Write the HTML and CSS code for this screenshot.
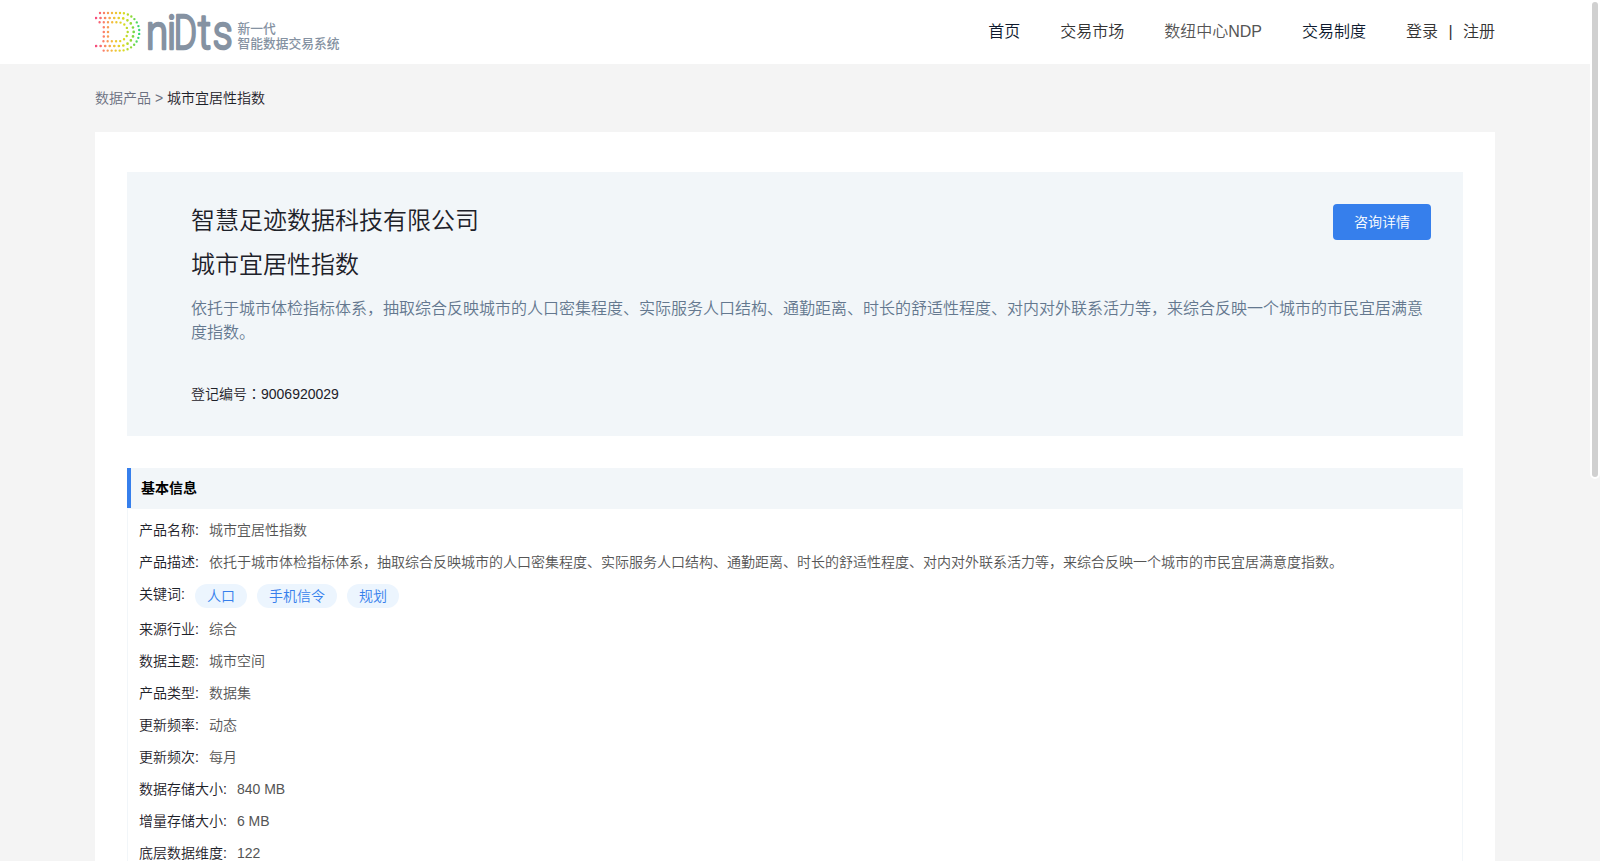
FILE: index.html
```html
<!DOCTYPE html>
<html lang="zh-CN">
<head>
    <meta charset="UTF-8">
    <meta name="viewport" content="width=device-width, initial-scale=1.0">
    <title>城市宜居性指数</title>
    <link rel="stylesheet" href="styles.css">
</head>
<body>
    <header class="header">
        <div class="container header-inner">
            <svg class="logo" width="250" height="64" viewBox="5 -8 250 64">
                <defs>
                    <linearGradient id="dots" gradientUnits="userSpaceOnUse" x1="5" y1="0" x2="50" y2="0">
                        <stop offset="0" stop-color="#f5487f"/>
                        <stop offset="0.2" stop-color="#fb8068"/>
                        <stop offset="0.4" stop-color="#f3c13c"/>
                        <stop offset="0.65" stop-color="#d9dc20"/>
                        <stop offset="0.83" stop-color="#86d83c"/>
                        <stop offset="1" stop-color="#2bd87c"/>
                    </linearGradient>
                </defs>
                <g fill="none" stroke="url(#dots)" stroke-linecap="round">
                    <path stroke-width="2.4" stroke-dasharray="0 4" d="M10 5H30.5A18.8 18.8 0 0 1 30.5 42.6H10"/>
                    <path stroke-width="2.7" stroke-dasharray="0 4.55" d="M6 10H29.7A14 14 0 0 1 29.7 38H6"/>
                    <path stroke-width="2.4" stroke-dasharray="0 4.2" d="M9.6 14.3H28.2A9.5 9.5 0 0 1 28.2 33.3H9.6"/>
                    <path stroke-width="2.5" stroke-dasharray="0 4.6" d="M13.8 19.3V29M18 19.3V29"/>
                </g>
                <g class="logo-name">
                    <text transform="translate(56 40.5) scale(0.84 1)">n</text>
                    <text transform="translate(76.9 40.5) scale(0.84 1)">i</text>
                    <text transform="translate(83.7 40.5) scale(0.74 1)">D</text>
                    <text transform="translate(108 40.5) scale(0.84 1)">t</text>
                    <text transform="translate(122.8 40.5) scale(0.82 1)">s</text>
                </g>
                <text class="logo-text" x="147.5" y="25">新一代</text>
                <text class="logo-text" x="147.5" y="39.9">智能数据交易系统</text>
            </svg>
            <nav class="nav">
                <a class="dark">首页</a>
                <a>交易市场</a>
                <a class="light">数纽中心NDP</a>
                <a class="dark">交易制度</a>
                <div class="user"><a>登录</a><span>|</span><a>注册</a></div>
            </nav>
        </div>
    </header>

    <div class="container breadcrumb">数据产品 &gt; <span>城市宜居性指数</span></div>

    <main class="container card">
        <section class="intro">
            <div class="intro-top">
                <h1>智慧足迹数据科技有限公司</h1>
                <button class="btn">咨询详情</button>
            </div>
            <h2>城市宜居性指数</h2>
            <p class="desc">依托于城市体检指标体系，抽取综合反映城市的人口密集程度、实际服务人口结构、通勤距离、时长的舒适性程度、对内对外联系活力等，来综合反映一个城市的市民宜居满意度指数。</p>
            <p class="code">登记编号<span class="colon" lang="zh-TW">：</span>9006920029</p>
        </section>

        <section class="info">
            <h3>基本信息</h3>
            <div class="info-list">
                <div class="row"><label>产品名称:</label><span>城市宜居性指数</span></div>
                <div class="row"><label>产品描述:</label><span>依托于城市体检指标体系，抽取综合反映城市的人口密集程度、实际服务人口结构、通勤距离、时长的舒适性程度、对内对外联系活力等，来综合反映一个城市的市民宜居满意度指数。</span></div>
                <div class="row"><label>关键词:</label>
                    <div class="tags">
                        <span class="tag">人口</span>
                        <span class="tag">手机信令</span>
                        <span class="tag">规划</span>
                    </div>
                </div>
                <div class="row"><label>来源行业:</label><span>综合</span></div>
                <div class="row"><label>数据主题:</label><span>城市空间</span></div>
                <div class="row"><label>产品类型:</label><span>数据集</span></div>
                <div class="row"><label>更新频率:</label><span>动态</span></div>
                <div class="row"><label>更新频次:</label><span>每月</span></div>
                <div class="row"><label>数据存储大小:</label><span>840 MB</span></div>
                <div class="row"><label>增量存储大小:</label><span>6 MB</span></div>
                <div class="row"><label>底层数据维度:</label><span>122</span></div>
            </div>
        </section>
    </main>

    <div class="scroll-thumb"></div>
</body>
</html>
```
FILE: styles.css
```css
* {
    box-sizing: border-box;
}

body {
    display: flex;
    flex-direction: column;
    margin: 0;
    padding-right: 10px;
    height: 100vh;
    overflow: hidden;
    background: #f4f4f4;
    font-family: "Liberation Sans", "Noto Sans CJK SC", sans-serif;
    font-size: 14px;
    font-weight: 350;
    line-height: 22px;
    color: #1d2129;
}

h1, h2, h3, p {
    margin: 0;
}

.container {
    width: 1400px;
    margin: 0 auto;
}

/* header */
.header {
    flex: none;
    height: 64px;
    margin-right: -10px;
    padding-right: 10px;
    background: #fff;
}

.header-inner {
    display: flex;
    justify-content: space-between;
    align-items: center;
    height: 64px;
}

.logo-name {
    font-family: Roboto, sans-serif;
    font-size: 48px;
    font-weight: 300;
    fill: #8592a2;
    stroke: #8592a2;
    stroke-width: 2.6;
    stroke-linejoin: round;
}

.logo-text {
    font-family: "Liberation Sans", "Noto Sans CJK SC", sans-serif;
    font-size: 12.75px;
    font-weight: 500;
    fill: #8592a2;
}

.nav {
    display: flex;
    gap: 40px;
    font-size: 16px;
    color: #333;
}

.nav .dark {
    color: #0e1a2e;
}

.nav .light {
    color: #555;
}

.user span {
    margin: 0 10.4px;
}

/* breadcrumb */
.breadcrumb {
    flex: none;
    padding: 23px 0;
    color: #6b7080;
}

.breadcrumb span {
    color: #1d2129;
}

.card {
    display: flex;
    flex-direction: column;
    flex: 1;
    min-height: 0;
    padding: 40px 32px 0;
    background: #fff;
    overflow: hidden;
}

/* intro */
.intro {
    flex: none;
    height: 264px;
    padding: 32px 32px 0 64px;
    background: #f2f6f9;
}

.intro-top {
    display: flex;
    justify-content: space-between;
    height: 44px;
}

h1, h2 {
    font-size: 24px;
    font-weight: 350;
    line-height: 34px;
}

.btn {
    width: 98px;
    height: 36px;
    padding: 0 0 2px;
    border: none;
    border-radius: 4px;
    background: #367fec;
    color: #fff;
    font-family: inherit;
    font-size: 14px;
    font-weight: 350;
}

.desc {
    margin-top: 15px;
    font-size: 16px;
    line-height: 24px;
    color: #64788f;
}

.code {
    margin-top: 38px;
}

.colon {
    font-family: "Noto Sans CJK TC", sans-serif;
    line-height: 1;
}

/* info */
.info {
    display: flex;
    flex-direction: column;
    flex: 1;
    min-height: 0;
    margin-top: 32px;
}

h3 {
    flex: none;
    height: 40px;
    padding-left: 10px;
    border-left: 4px solid #367fec;
    background: #f2f6f9;
    font-size: 14px;
    line-height: 41px;
    color: #000;
}

.info-list {
    flex: 1;
    min-height: 0;
    padding: 10px 11px 0;
    border: 1px solid #f2f6f9;
    border-bottom: none;
}

.row {
    display: flex;
    gap: 10px;
    margin-bottom: 10px;
}

.row > span {
    color: #555;
}

.tags {
    display: flex;
    gap: 10px;
    padding-top: 1px;
}

.tag {
    height: 24px;
    padding: 0 12px;
    border-radius: 12px;
    background: #ecf5fe;
    line-height: 24px;
    color: #367fec;
}

.scroll-thumb {
    position: fixed;
    top: 0;
    right: 0;
    width: 10px;
    height: 479px;
    border: 2px solid #fff;
    border-radius: 5px;
    background: #d0d0d0;
}
```
